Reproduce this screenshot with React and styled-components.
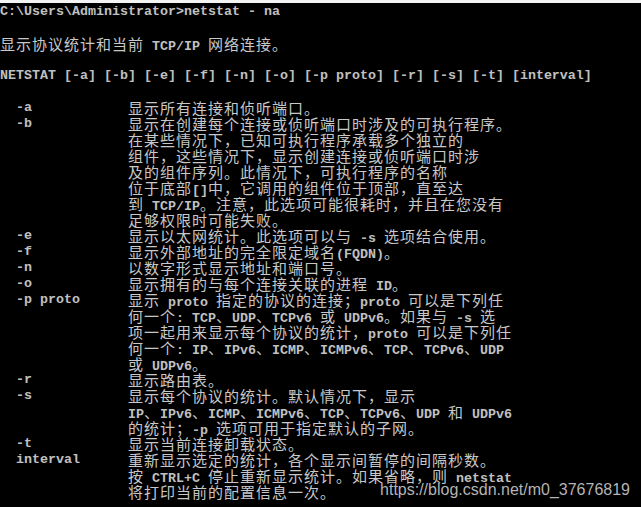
import React from 'react';
import styled, {createGlobalStyle} from 'styled-components';

const GlobalStyle = createGlobalStyle`
    html, body {
        margin: 0;
        padding: 0;
        background: #000;
    }
`

const Console = styled.div`
    width: 641px;
    height: 507px;
    background: #000;
    border-top: 3px solid #f4f4f4;
    box-sizing: border-box;
    padding-top: 1px;
    position: relative;
    overflow: hidden;
    color: #c0c0c0;
    font-family: "Liberation Mono", monospace;
    font-weight: bold;
    font-size: 13.33px;
`

const Line = styled.div`
    height: 16px;
    line-height: 16px;
    white-space: pre;
`

// CJK glyphs take two cells: 15px glyph + 1px gap = 16px
const Wide = styled.span`
    font-family: "Noto Sans CJK SC", sans-serif;
    font-weight: 400;
    font-size: 15px;
    letter-spacing: 1px;
    line-height: 16px;
    color: #c8c8c8;
`

const Options = styled.div`
    display: grid;
    grid-template-columns: 128px 1fr;
`

const Flag = styled.div`
    padding-left: 16px;
    height: 16px;
    line-height: 16px;
    white-space: pre;
`

const Desc = styled.div`
    display: flex;
    flex-direction: column;
`

const Watermark = styled.div`
    position: absolute;
    right: 11px;
    bottom: 8px;
    font-family: "Liberation Sans", Arial, sans-serif;
    font-weight: normal;
    font-size: 16px;
    line-height: 18px;
    color: rgba(215, 215, 215, 0.85);
    text-shadow: 0 0 1px rgba(0, 0, 0, 0.6);
`

const wideRe = /([\u2000-\u206f\u3000-\u303f\u4e00-\u9fff\uff00-\uffef]+)/

const Text = ({children}) => (
    <Line>
        {children.split(wideRe).map((part, i) =>
            wideRe.test(part) ? <Wide key={i}>{part}</Wide> : part
        )}
    </Line>
)

const options = [
    ['-a', ['显示所有连接和侦听端口。']],
    ['-b', [
        '显示在创建每个连接或侦听端口时涉及的可执行程序。',
        '在某些情况下，已知可执行程序承载多个独立的',
        '组件，这些情况下，显示创建连接或侦听端口时涉',
        '及的组件序列。此情况下，可执行程序的名称',
        '位于底部[]中，它调用的组件位于顶部，直至达',
        '到 TCP/IP。注意，此选项可能很耗时，并且在您没有',
        '足够权限时可能失败。',
    ]],
    ['-e', ['显示以太网统计。此选项可以与 -s 选项结合使用。']],
    ['-f', ['显示外部地址的完全限定域名(FQDN)。']],
    ['-n', ['以数字形式显示地址和端口号。']],
    ['-o', ['显示拥有的与每个连接关联的进程 ID。']],
    ['-p proto', [
        '显示 proto 指定的协议的连接；proto 可以是下列任',
        '何一个: TCP、UDP、TCPv6 或 UDPv6。如果与 -s 选',
        '项一起用来显示每个协议的统计，proto 可以是下列任',
        '何一个: IP、IPv6、ICMP、ICMPv6、TCP、TCPv6、UDP',
        '或 UDPv6。',
    ]],
    ['-r', ['显示路由表。']],
    ['-s', [
        '显示每个协议的统计。默认情况下，显示',
        'IP、IPv6、ICMP、ICMPv6、TCP、TCPv6、UDP 和 UDPv6',
        '的统计；-p 选项可用于指定默认的子网。',
    ]],
    ['-t', ['显示当前连接卸载状态。']],
    ['interval', [
        '重新显示选定的统计，各个显示间暂停的间隔秒数。',
        '按 CTRL+C 停止重新显示统计。如果省略，则 netstat',
        '将打印当前的配置信息一次。',
    ]],
]

export default function App() {
    return (
        <Console>
            <GlobalStyle/>
            <Text>{'C:\\Users\\Administrator>netstat - na'}</Text>
            <Line/>
            <Text>显示协议统计和当前 TCP/IP 网络连接。</Text>
            <Line/>
            <Text>NETSTAT [-a] [-b] [-e] [-f] [-n] [-o] [-p proto] [-r] [-s] [-t] [interval]</Text>
            <Line/>
            <Options>
                {options.map(([flag, lines]) => (
                    <React.Fragment key={flag}>
                        <Flag>{flag}</Flag>
                        <Desc>
                            {lines.map((l, i) => <Text key={i}>{l}</Text>)}
                        </Desc>
                    </React.Fragment>
                ))}
            </Options>
            <Watermark>https://blog.csdn.net/m0_37676819</Watermark>
        </Console>
    );
}
